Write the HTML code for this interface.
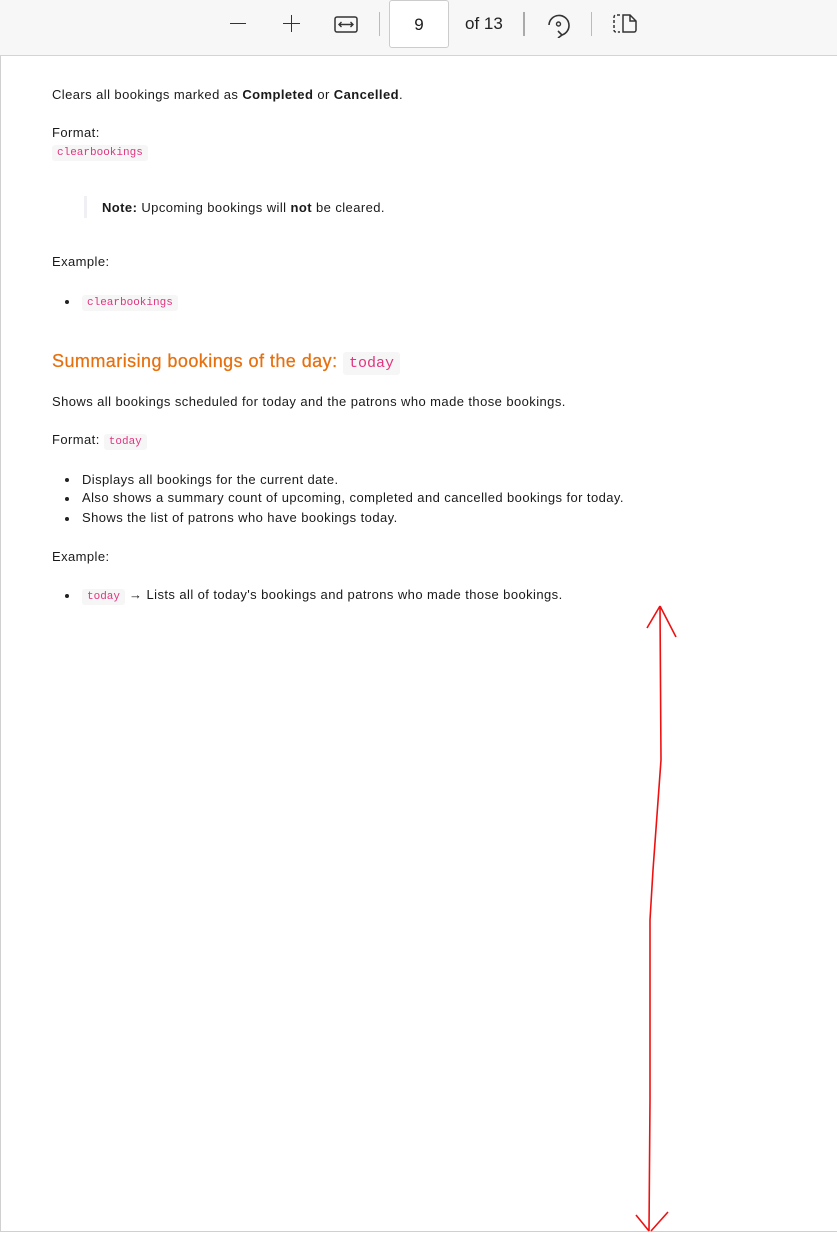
<!DOCTYPE html>
<html><head><meta charset="utf-8"><style>
body{margin:0;width:837px;height:1233px;overflow:hidden;background:#fff;font-family:"Liberation Sans",sans-serif;color:#1a1a1a;position:relative}
.tb{position:absolute;left:0;top:0;width:837px;height:55px;background:#f7f7f7;border-bottom:1px solid #d4d4d4}
.page{position:absolute;left:0;top:56px;width:836px;height:1175px;border-left:1px solid #d0d0d0;border-bottom:1px solid #d0d0d0}
.t{position:absolute;font-size:13px;white-space:nowrap;letter-spacing:0.42px}
code{font-family:"Liberation Mono",monospace;font-size:11px;color:#e0357f;background:#f6f6f6;padding:2px 5px;border-radius:3px;letter-spacing:0}
.bul{position:absolute;width:4px;height:4px;border-radius:50%;background:#222}
</style></head><body>
<div class="tb">
<div style="position:absolute;left:230px;top:23px;width:16px;height:1.2px;background:#333"></div>
<div style="position:absolute;left:283px;top:23px;width:17px;height:1.2px;background:#333"></div>
<div style="position:absolute;left:291px;top:15px;width:1.2px;height:17px;background:#333"></div>
<svg style="position:absolute;left:333px;top:14px" width="26" height="20"><rect x="2" y="3" width="22" height="15" rx="2" fill="none" stroke="#333" stroke-width="1.5"/><path d="M6 10.5h14M8.5 8l-2.5 2.5 2.5 2.5M17.5 8l2.5 2.5-2.5 2.5" stroke="#333" stroke-width="1.4" fill="none"/></svg>
<div style="position:absolute;left:379px;top:12px;width:1px;height:24px;background:#bbb"></div>
<div style="position:absolute;left:389px;top:0;width:58px;height:46px;background:#fff;border:1px solid #ccc;border-radius:3px;font-size:17px;text-align:center;line-height:47px">9</div>
<div class="t" style="left:465px;top:14px;font-size:17px;color:#222;letter-spacing:0">of 13</div>
<div style="position:absolute;left:523px;top:12px;width:1.5px;height:24px;background:#aaa"></div>
<svg style="position:absolute;left:543px;top:10px" width="30" height="28"><path d="M6 15a10 10 0 1 1 13 10" fill="none" stroke="#333" stroke-width="1.6"/><path d="M15 21l4 4-4 3" fill="none" stroke="#333" stroke-width="1.6"/><circle cx="15.5" cy="14" r="2" fill="none" stroke="#333" stroke-width="1.4"/></svg>
<div style="position:absolute;left:591px;top:12px;width:1px;height:24px;background:#bbb"></div>
<svg style="position:absolute;left:611px;top:12px" width="28" height="24"><path d="M9 3H5a2 2 0 0 0-2 2v13a2 2 0 0 0 2 2h4" fill="none" stroke="#333" stroke-width="1.5" stroke-dasharray="3 2"/><path d="M12 3h7l6 6v9a2 2 0 0 1-2 2H12z M19 3v6h6" fill="none" stroke="#333" stroke-width="1.5"/></svg>
</div>
<div class="page"></div>
<div class="t" style="left:52px;top:87px">Clears all bookings marked as <b>Completed</b> or <b>Cancelled</b>.</div>
<div class="t" style="left:52px;top:125px">Format:</div>
<div class="t" style="left:52px;top:143px"><code>clearbookings</code></div>
<div style="position:absolute;left:84px;top:196px;width:3px;height:22px;background:#f0f0f4"></div>
<div class="t" style="left:102px;top:200px"><b>Note:</b> Upcoming bookings will <b>not</b> be cleared.</div>
<div class="t" style="left:52px;top:254px">Example:</div>
<div class="bul" style="left:65px;top:300px"></div>
<div class="t" style="left:82px;top:293px"><code>clearbookings</code></div>
<div class="t" style="left:52px;top:351px;font-size:18px;color:#e6700f;letter-spacing:0.45px;-webkit-text-stroke:0.25px #e6700f">Summarising bookings of the day: <code style="font-size:15px;padding:3px 6px;-webkit-text-stroke:0">today</code></div>
<div class="t" style="left:52px;top:394px">Shows all bookings scheduled for today and the patrons who made those bookings.</div>
<div class="t" style="left:52px;top:432px">Format: <code>today</code></div>
<div class="bul" style="left:65px;top:478px"></div>
<div class="t" style="left:82px;top:472px">Displays all bookings for the current date.</div>
<div class="bul" style="left:65px;top:497px"></div>
<div class="t" style="left:82px;top:490px">Also shows a summary count of upcoming, completed and cancelled bookings for today.</div>
<div class="bul" style="left:65px;top:517px"></div>
<div class="t" style="left:82px;top:510px">Shows the list of patrons who have bookings today.</div>
<div class="t" style="left:52px;top:549px">Example:</div>
<div class="bul" style="left:65px;top:594px"></div>
<div class="t" style="left:82px;top:587px"><code>today</code> → Lists all of today's bookings and patrons who made those bookings.</div>
<svg style="position:absolute;left:0;top:0" width="837" height="1233"><path d="M660 606 L661 760 L653 870 L650 920 L650 1100 L649 1231 M660 606 L647 628 M660 606 L676 637 M649 1231 L636 1215 M651 1231 L668 1212" fill="none" stroke="#e11" stroke-width="1.6"/></svg>
</body></html>
